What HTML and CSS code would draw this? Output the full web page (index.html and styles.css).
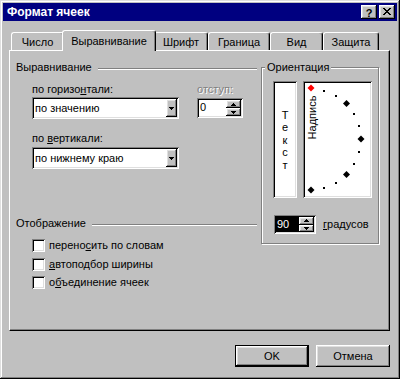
FILE: index.html
```html
<!DOCTYPE html>
<html lang="ru">
<head>
<meta charset="utf-8">
<title>Формат ячеек</title>
<link rel="stylesheet" href="styles.css">
</head>
<body>
<div class="window">
  <div class="titlebar">
    <span class="title">Формат ячеек</span>
    <div class="title-btns">
      <span class="tbtn help">?</span>
      <span class="tbtn close">
        <svg width="8" height="7" viewBox="0 0 8 7" shape-rendering="crispEdges">
          <rect x="0" y="0" width="2" height="1"/><rect x="6" y="0" width="2" height="1"/>
          <rect x="1" y="1" width="2" height="1"/><rect x="5" y="1" width="2" height="1"/>
          <rect x="2" y="2" width="4" height="1"/>
          <rect x="3" y="3" width="2" height="1"/>
          <rect x="2" y="4" width="4" height="1"/>
          <rect x="1" y="5" width="2" height="1"/><rect x="5" y="5" width="2" height="1"/>
          <rect x="0" y="6" width="2" height="1"/><rect x="6" y="6" width="2" height="1"/>
        </svg>
      </span>
    </div>
  </div>

  <div class="content">
    <div class="tabs">
      <div class="tab w-chislo">Число</div>
      <div class="tab active w-vyr">Выравнивание</div>
      <div class="tab w-shrift">Шрифт</div>
      <div class="tab w-gran">Граница</div>
      <div class="tab w-vid">Вид</div>
      <div class="tab w-zash">Защита</div>
    </div>

    <div class="panel">
      <div class="left">
        <div class="gtitle"><span>Выравнивание</span><span class="etch"></span></div>

        <div class="align-row">
          <div class="hcol">
            <div class="label">по горизо<u>н</u>тали:</div>
            <div class="select sel1">
              <span class="val">по значению</span>
              <span class="dd"><svg width="5" height="3" viewBox="0 0 5 3" shape-rendering="crispEdges"><rect x="0" y="0" width="5" height="1"/><rect x="1" y="1" width="3" height="1"/><rect x="2" y="2" width="1" height="1"/></svg></span>
            </div>
          </div>
          <div class="icol">
            <div class="label disabled">отступ:</div>
            <div class="spin spin-indent">
              <span class="val">0</span>
              <span class="arrows">
                <span class="arr"><svg width="5" height="3" viewBox="0 0 5 3" shape-rendering="crispEdges"><rect x="2" y="0" width="1" height="1"/><rect x="1" y="1" width="3" height="1"/><rect x="0" y="2" width="5" height="1"/></svg></span>
                <span class="arr"><svg width="5" height="3" viewBox="0 0 5 3" shape-rendering="crispEdges"><rect x="0" y="0" width="5" height="1"/><rect x="1" y="1" width="3" height="1"/><rect x="2" y="2" width="1" height="1"/></svg></span>
              </span>
            </div>
          </div>
        </div>

        <div class="label label-v">по <u>в</u>ертикали:</div>
        <div class="select sel2">
          <span class="val">по нижнему краю</span>
          <span class="dd"><svg width="5" height="3" viewBox="0 0 5 3" shape-rendering="crispEdges"><rect x="0" y="0" width="5" height="1"/><rect x="1" y="1" width="3" height="1"/><rect x="2" y="2" width="1" height="1"/></svg></span>
        </div>

        <div class="gtitle gtitle-disp"><span>Отображение</span><span class="etch"></span></div>

        <div class="checks">
          <div class="check"><span class="box"></span><span>перено<u>с</u>ить по словам</span></div>
          <div class="check"><span class="box"></span><span><u>а</u>втоподбор ширины</span></div>
          <div class="check"><span class="box"></span><span>о<u>б</u>ъединение ячеек</span></div>
        </div>
      </div>

      <div class="right">
        <div class="frame">
          <div class="legend">Ориентация</div>
          <div class="boxes">
            <div class="textbox">
              <span>Т</span><span>е</span><span>к</span><span>с</span><span>т</span>
            </div>
            <div class="dial">
              <svg width="65" height="113" viewBox="0 0 65 113">
                <text class="dial-text" transform="translate(10.5,34.5) rotate(-90)" text-anchor="middle">Надпись</text>
                <g fill="#000" shape-rendering="crispEdges">
                  <rect x="18" y="7" width="2" height="2"/>
                  <rect x="30" y="12" width="2" height="2"/>
                  <rect x="48" y="30" width="2" height="2"/>
                  <rect x="53" y="42" width="2" height="2"/>
                  <rect x="53" y="68" width="2" height="2"/>
                  <rect x="48" y="80" width="2" height="2"/>
                  <rect x="30" y="99" width="2" height="2"/>
                  <rect x="18" y="104" width="2" height="2"/>
                </g>
                <g fill="#000">
                  <polygon points="41.5,17 45,20.5 41.5,24 38,20.5"/>
                  <polygon points="56,52.5 59.5,56 56,59.5 52.5,56"/>
                  <polygon points="41.5,88 45,91.5 41.5,95 38,91.5"/>
                  <polygon points="6,103.5 9.5,107 6,110.5 2.5,107"/>
                </g>
                <polygon fill="#ff0000" points="6,1.5 9.5,5 6,8.5 2.5,5"/>
              </svg>
            </div>
          </div>
          <div class="deg-row">
            <div class="spin spin-deg">
              <span class="val sel">90</span>
              <span class="arrows">
                <span class="arr"><svg width="5" height="3" viewBox="0 0 5 3" shape-rendering="crispEdges"><rect x="2" y="0" width="1" height="1"/><rect x="1" y="1" width="3" height="1"/><rect x="0" y="2" width="5" height="1"/></svg></span>
                <span class="arr"><svg width="5" height="3" viewBox="0 0 5 3" shape-rendering="crispEdges"><rect x="0" y="0" width="5" height="1"/><rect x="1" y="1" width="3" height="1"/><rect x="2" y="2" width="1" height="1"/></svg></span>
              </span>
            </div>
            <span class="deg-label"><u>г</u>радусов</span>
          </div>
        </div>
      </div>
    </div>

    <div class="buttons">
      <div class="btn default">OK</div>
      <div class="btn">Отмена</div>
    </div>
  </div>
</div>
</body>
</html>
```

FILE: styles.css
```css
* { box-sizing: border-box; }

body {
  margin: 0;
  background: #c0c0c0;
  font: 11px/13px "Liberation Sans", Arial, sans-serif;
  color: #000;
}

u { text-decoration: underline; text-underline-offset: 1px; }

.window {
  width: 400px;
  height: 379px;
  padding: 3px;
  background: #c0c0c0;
  box-shadow: inset -1px -1px #000, inset 1px 1px #dfdfdf,
              inset -2px -2px #808080, inset 2px 2px #fff;
}

/* title bar */
.titlebar {
  height: 18px;
  background: #000080;
  display: flex;
  align-items: center;
  justify-content: space-between;
  padding: 0 2px 0 4px;
}
.title {
  color: #fff;
  font-weight: bold;
  font-size: 12px;
  line-height: 14px;
}
.title-btns { display: flex; gap: 2px; }
.tbtn {
  width: 16px;
  height: 14px;
  background: #c0c0c0;
  box-shadow: inset -1px -1px #000, inset 1px 1px #fff,
              inset -2px -2px #808080, inset 2px 2px #dfdfdf;
  display: flex;
  align-items: center;
  justify-content: center;
}
.help { font-weight: bold; font-size: 11px; line-height: 12px; padding-top: 1px; }
.close svg { fill: #000; margin-top: -1px; }

/* content */
.content { padding: 0 4px 0 6px; }

.tabs {
  display: flex;
  align-items: flex-end;
  height: 20px;
  margin-top: 9px;
  padding-left: 2px;
}
.tab {
  height: 18px;
  border-top: 1px solid #fff;
  border-left: 1px solid #fff;
  border-right: 1px solid #000;
  box-shadow: inset -1px 0 #808080;
  border-radius: 3px 3px 0 0;
  text-align: center;
  padding-top: 2px;
  line-height: 15px;
  background: #c0c0c0;
}
.tab.active {
  position: relative;
  z-index: 2;
  height: 21px;
  margin: 0 -2px -1px;
  padding-top: 3px;
}
.w-chislo { width: 53px; }
.w-vyr { width: 94px; }
.w-shrift { width: 54px; }
.w-gran { width: 62px; }
.w-vid { width: 53px; }
.w-zash { width: 56px; }

.panel {
  width: 381px;
  height: 281px;
  border-top: 1px solid #fff;
  border-left: 1px solid #fff;
  border-right: 1px solid #000;
  border-bottom: 1px solid #000;
  box-shadow: inset -1px -1px #808080;
  display: grid;
  grid-template-columns: 241px 118px;
  column-gap: 4px;
  align-items: start;
  padding: 10px 0 0 6px;
}

/* group titles */
.gtitle {
  display: flex;
  height: 13px;
}
.gtitle .etch {
  flex: 1;
  margin: 7px 0 0 6px;
  height: 2px;
  border-top: 1px solid #808080;
  border-bottom: 1px solid #fff;
}
.gtitle-disp { margin-top: 48px; }

.label { height: 13px; }
.disabled { color: #808080; text-shadow: 1px 1px #fff; }

.align-row {
  display: flex;
  margin-top: 9px;
  padding-left: 16px;
}
.hcol { width: 147px; }
.icol { margin-left: 18px; }

.label-v { margin: 13px 0 0 16px; }

/* sunken fields */
.select, .spin, .textbox, .dial, .box {
  background: #fff;
  box-shadow: inset 1px 1px #808080, inset -1px -1px #fff,
              inset 2px 2px #000, inset -2px -2px #dfdfdf;
}

.select {
  display: flex;
  width: 147px;
  height: 22px;
  padding: 2px;
}
.sel1 { margin-top: 1px; }
.sel2 { margin: 2px 0 0 16px; }
.select .val {
  flex: 1;
  padding-left: 1px;
  line-height: 18px;
}
.dd, .arr {
  background: #c0c0c0;
  box-shadow: inset -1px -1px #000, inset 1px 1px #fff,
              inset -2px -2px #808080, inset 2px 2px #dfdfdf;
  display: flex;
  align-items: center;
  justify-content: center;
}
.dd { width: 11px; }
.dd svg, .arr svg { fill: #000; }

.spin {
  display: flex;
  padding: 2px;
}
.spin .val { flex: 1; padding-left: 1px; line-height: 15px; }
.spin .arrows {
  width: 15px;
  display: flex;
  flex-direction: column;
}
.spin .arr { flex: 1; }
.spin-indent { width: 46px; height: 20px; margin-top: 2px; }
.spin-deg { width: 42px; height: 19px; }
.spin .val.sel {
  background: #000;
  color: #fff;
  line-height: 15px;
  padding-left: 1px;
}

/* checkboxes */
.checks {
  margin-top: 9px;
  padding-left: 16px;
  display: flex;
  flex-direction: column;
  gap: 5.5px;
}
.check {
  display: flex;
  gap: 4px;
  height: 13px;
}
.box { width: 13px; height: 13px; }

/* orientation */
.frame {
  width: 118px;
  margin-top: 6px;
  border: 1px solid #808080;
  box-shadow: inset 1px 1px #fff, 1px 1px #fff;
  padding-bottom: 9px;
}
.legend {
  width: max-content;
  margin: -7px 0 0 3px;
  padding: 0 2px;
  background: #c0c0c0;
  height: 13px;
}
.boxes {
  display: flex;
  gap: 6px;
  margin: 7px 0 0 11px;
}
.textbox {
  width: 24px;
  height: 117px;
  display: flex;
  flex-direction: column;
  align-items: center;
  justify-content: center;
  line-height: 12.5px;
  padding-top: 1px;
}
.dial {
  width: 69px;
  height: 117px;
  padding: 2px;
}
.dial svg { display: block; }
.dial-text { font: 11px "Liberation Sans", Arial, sans-serif; fill: #000; }

.deg-row {
  display: flex;
  align-items: center;
  margin: 17px 0 0 12px;
}
.deg-label { margin-left: 7px; }

/* bottom buttons */
.buttons {
  width: 381px;
  display: flex;
  justify-content: flex-end;
  gap: 7px;
  margin-top: 14px;
}
.btn {
  width: 74px;
  height: 22px;
  background: #c0c0c0;
  box-shadow: inset -1px -1px #000, inset 1px 1px #fff,
              inset -2px -2px #808080, inset 2px 2px #dfdfdf;
  display: flex;
  align-items: center;
  justify-content: center;
}
.btn.default {
  border: 1px solid #000;
}
```
